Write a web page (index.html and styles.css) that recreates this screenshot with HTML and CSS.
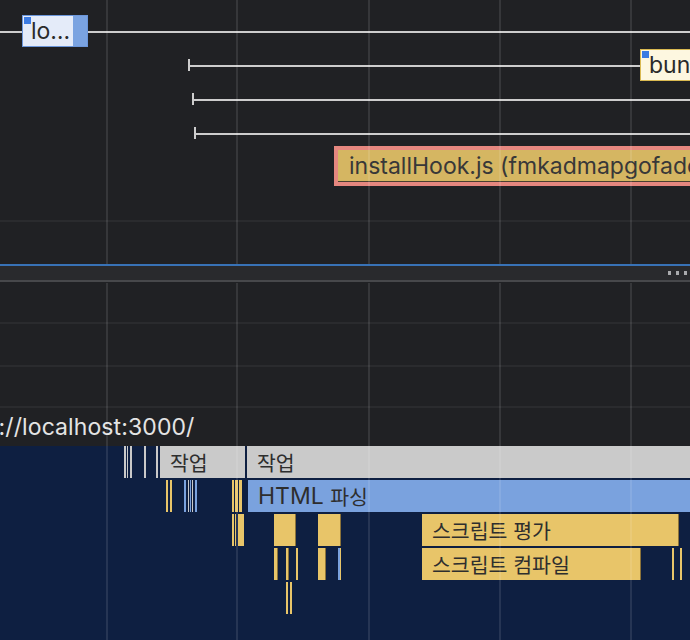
FILE: index.html
```html
<!DOCTYPE html>
<html lang="ko">
<head>
<meta charset="utf-8">
<title>Performance</title>
<link rel="stylesheet" href="styles.css">
</head>
<body>
<div class="panel">
  <section class="pane pane-top">
    <div class="top-tracks">
      <div class="row">
        <span class="rule" style="left:0;width:690px"></span>
        <div class="ev ev-sel" style="left:22px;width:66px"><i class="mark"></i><span class="lbl">lo…</span><span class="self"></span></div>
      </div>
      <div class="row">
        <span class="tick" style="left:188px"></span>
        <span class="rule" style="left:190px;width:450px"></span>
        <div class="ev ev-bun" style="left:640px;width:80px"><i class="mark"></i><span class="lbl">bundle.js</span></div>
      </div>
      <div class="row">
        <span class="tick" style="left:192px"></span>
        <span class="rule" style="left:194px;width:496px"></span>
      </div>
      <div class="row">
        <span class="tick" style="left:194px"></span>
        <span class="rule" style="left:196px;width:494px"></span>
      </div>
      <div class="row row-hook">
        <div class="ev ev-hook" style="left:338px;width:380px"><span class="lbl">installHook.js (fmkadmapgofadopljbjfkapdkoienihi)</span></div>
      </div>
    </div>
    <div class="grid">
      <i style="left:106px"></i><i style="left:236px"></i><i style="left:368px"></i><i style="left:499px"></i><i style="left:630px"></i>
    </div>
  </section>

  <div class="divider">
    <span class="dots"><i></i><i></i><i></i></span>
  </div>

  <section class="pane pane-bottom">
    <div class="lane lane-1"></div>
    <div class="lane lane-2"></div>
    <div class="lane lane-3"></div>
    <div class="url-row">http://localhost:3000/</div>
    <div class="main">
      <div class="mrow">
        <span class="bar ln-w" style="left:124px;width:1.5px"></span>
        <span class="bar ln-w" style="left:126.5px;width:1px"></span>
        <span class="bar ln-w" style="left:130px;width:2px"></span>
        <span class="bar ln-w" style="left:144px;width:2px"></span>
        <span class="bar ln-w" style="left:156px;width:2px"></span>
        <div class="bar box gray" style="left:160px;width:85px"><span class="ko">작업</span></div>
        <div class="bar box gray" style="left:247px;width:460px"><span class="ko">작업</span></div>
      </div>
      <div class="mrow">
        <span class="bar ln-y" style="left:166px;width:2px"></span>
        <span class="bar ln-y" style="left:170px;width:1.5px"></span>
        <span class="bar ln-b" style="left:184px;width:1.5px"></span>
        <span class="bar ln-w" style="left:187.5px;width:1px"></span>
        <span class="bar ln-b" style="left:189.5px;width:1.5px"></span>
        <span class="bar ln-w" style="left:192px;width:1px"></span>
        <span class="bar ln-b" style="left:194.5px;width:2.5px"></span>
        <span class="bar ln-y" style="left:232px;width:2px"></span>
        <span class="bar ln-y" style="left:235px;width:3px"></span>
        <span class="bar ln-y" style="left:238.5px;width:3px"></span>
        <div class="bar box blue" style="left:248px;width:460px">HTML&nbsp;<span class="ko">파싱</span></div>
      </div>
      <div class="mrow">
        <span class="bar ln-y" style="left:232px;width:1.5px"></span>
        <span class="bar ln-y" style="left:234.5px;width:1.5px"></span>
        <span class="bar ln-y" style="left:238px;width:1.5px"></span>
        <span class="bar ln-y" style="left:240px;width:1.5px"></span>
        <span class="bar ln-y" style="left:242px;width:1.5px"></span>
        <span class="bar yel" style="left:274px;width:22px"></span>
        <span class="bar yel" style="left:318px;width:23px"></span>
        <div class="bar box yel" style="left:422px;width:257px"><span class="ko">스크립트 평가</span></div>
      </div>
      <div class="mrow">
        <span class="bar yel" style="left:274px;width:3.5px"></span>
        <span class="bar yel" style="left:286px;width:3px"></span>
        <span class="bar ln-y" style="left:296px;width:1.5px"></span>
        <span class="bar yel" style="left:318px;width:8px"></span>
        <span class="bar ln-b" style="left:338px;width:1.5px"></span>
        <span class="bar ln-y" style="left:339.5px;width:1.5px"></span>
        <div class="bar box yel" style="left:422px;width:219px"><span class="ko">스크립트 컴파일</span></div>
        <span class="bar ln-y" style="left:672px;width:2px"></span>
        <span class="bar ln-y" style="left:680px;width:2px"></span>
      </div>
      <div class="mrow">
        <span class="bar ln-y" style="left:286px;width:1.5px"></span>
        <span class="bar ln-y" style="left:290px;width:1.5px"></span>
      </div>
    </div>
    <div class="grid grid-bottom">
      <i style="left:106px"></i><i style="left:236px"></i><i style="left:368px"></i><i style="left:499px"></i><i style="left:630px"></i>
    </div>
  </section>
</div>
</body>
</html>
```

FILE: styles.css
```css
* { box-sizing: border-box; margin: 0; padding: 0; }
html, body { width: 690px; height: 640px; overflow: hidden; }
body {
  background: #202124;
  font-family: Inter, "Liberation Sans", "Noto Sans CJK KR", sans-serif;
  font-size: 23px;
  color: #303030;
}
.panel { width: 690px; height: 640px; display: flex; flex-direction: column; overflow: hidden; }

.pane { position: relative; flex: none; }
.pane-top { height: 264px; }
.top-tracks {
  height: 222px;
  border-bottom: 2px solid #2a2b2e;
  padding-top: 15px;
  display: flex;
  flex-direction: column;
  gap: 2px;
}
.row { position: relative; height: 32px; flex: none; }
.row-hook { margin-top: -1px; }
.rule { position: absolute; top: 16px; height: 2px; background: #cdcdcd; }
.tick { position: absolute; top: 10px; width: 2px; height: 12px; background: #cdcdcd; }

.ev {
  position: absolute;
  top: 0;
  height: 32px;
  display: flex;
  align-items: center;
  white-space: nowrap;
  overflow: hidden;
}
.ev .lbl { line-height: 30px; }
.mark { position: absolute; left: 1px; top: 1px; width: 7px; height: 7px; background: #3b7be3; }
.ev-sel { border: 1px solid #6b96da; background: #e4ebf9; color: #2b2b2b; }
.ev-sel .lbl { flex: 1; padding-left: 8px; }
.ev-sel .self { align-self: stretch; width: 14px; background: #7aa3e1; }
.ev-bun { border: 1.5px solid #d9b952; background: #fdf7e0; color: #2b2b2b; }
.ev-bun .lbl { padding-left: 8px; }
.ev-hook {
  background: #d5b662;
  border-bottom: 1px solid #4a4030;
  outline: 4px solid #e5877f;
  color: #383838;
}
.ev-hook .lbl { padding-left: 11px; }

.grid { position: absolute; left: 0; top: 0; width: 100%; height: 100%; pointer-events: none; z-index: 5; }
.grid-bottom { top: 1px; height: calc(100% - 1px); }
.grid i { position: absolute; top: 0; bottom: 0; width: 2px; background: rgba(255, 255, 255, 0.1); }

.divider {
  flex: none;
  height: 18px;
  background: #292a2d;
  border-top: 2px solid #3872b6;
  border-bottom: 2px solid #47484b;
  display: flex;
  justify-content: flex-end;
  align-items: center;
  padding-right: 3px;
}
.dots { display: flex; gap: 5px; }
.dots i { display: block; width: 3px; height: 4px; background: #a9aaad; }

.pane-bottom { flex: 1; }
.lane { border-bottom: 2px solid #2a2b2e; }
.lane-1 { height: 42px; }
.lane-2 { height: 43px; }
.lane-3 { height: 41px; }
.url-row {
  height: 38px;
  line-height: 38px;
  color: #e4e4e4;
  white-space: nowrap;
  margin-left: -44px;
  letter-spacing: 0.1px;
}
.main {
  height: 194px;
  background: #0e1f41;
  display: flex;
  flex-direction: column;
  gap: 2px;
}
.mrow { position: relative; height: 32px; flex: none; }
.bar { position: absolute; top: 0; height: 100%; }
.box {
  display: flex;
  align-items: center;
  padding-left: 10px;
  white-space: nowrap;
  overflow: hidden;
  color: #2e2e2e;
}
.gray { background: #cacaca; }
.blue { background: #7aa2de; }
.yel { background: #e8c569; box-shadow: inset -1px 0 0 #8c7339; }
.ln-w { background: #c9c9c9; }
.ln-b { background: #7aa2de; }
.ln-y { background: #e8c569; }
.ko { font-family: "Noto Sans CJK KR", sans-serif; font-size: 20.5px; }
```
